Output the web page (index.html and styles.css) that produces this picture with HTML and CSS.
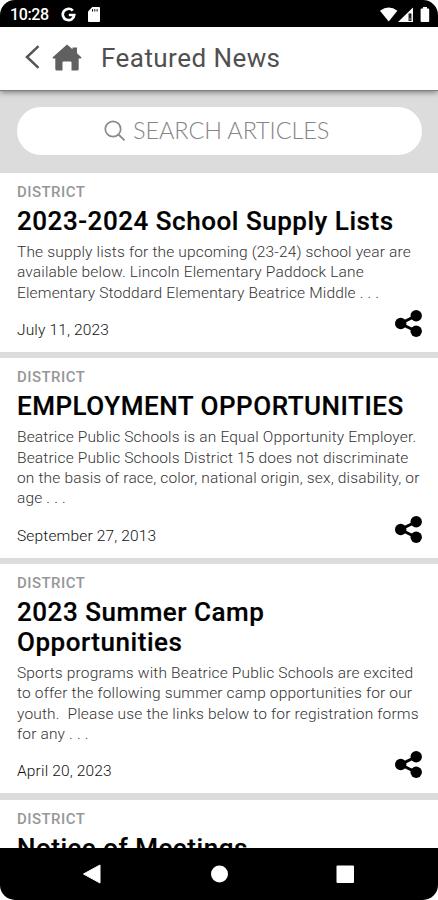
FILE: index.html
```html
<!DOCTYPE html>
<html lang="en">
<head>
    <meta charset="UTF-8">
    <meta name="viewport" content="width=device-width, initial-scale=1.0">
    <title>Featured News</title>
    <link rel="stylesheet" href="styles.css">
</head>
<body>
    <svg width="0" height="0" class="defs">
        <symbol id="share" viewBox="0 0 27 27">
            <path d="M21.5 5.5L5.5 13.5L21.5 21.5" fill="none" stroke="#000" stroke-width="3"/>
            <circle cx="5.7" cy="13.500" r="5.700"/>
            <circle cx="21.2" cy="5.8" r="5.700"/>
            <circle cx="21.2" cy="21.2" r="5.700"/>
        </symbol>
    </svg>
    <div id="phone">
        <div class="status">
            <span class="time">10:28</span>
            <svg class="google" width="15" height="16" viewBox="0 0 15 16">
                <path d="M11.8 3.7A5.7 5.7 0 1 0 13.2 8H7.8" fill="none" stroke="#fff" stroke-width="2.7"/>
            </svg>
            <svg class="sdcard" width="12" height="15" viewBox="0 0 12 15">
                <path d="M4.3 0H11a1 1 0 0 1 1 1v13a1 1 0 0 1-1 1H1a1 1 0 0 1-1-1V4.5z" fill="#fff"/>
                <path d="M4.5 2.2v2.3M6.8 2.2v2.3M9.1 2.2v2.3" stroke="#000" stroke-width="1"/>
            </svg>
            <svg class="signals" width="50" height="16" viewBox="0 0 50 16">
                <path d="M0 3.8Q8.7-3 17.4 3.8L8.7 14.6z" fill="#fff"/>
                <path d="M33 .5V15H18z" fill="#fff"/>
                <path d="M28 6.5h4.2V14H28z" fill="#999"/>
                <path d="M30 6.5v5M30 12.5v1.5" stroke="#000" stroke-width="1.6"/>
                <path d="M43 0h4v1.5h1.2a1 1 0 0 1 1 1V14a1 1 0 0 1-1 1h-6.6a1 1 0 0 1-1-1V2.5a1 1 0 0 1 1-1H43z" fill="#fff"/>
            </svg>
        </div>
        <div class="header">
            <svg class="back" width="15" height="24" viewBox="0 0 15 24">
                <path d="M13.5 1.2L2 12l11.5 10.8" fill="none" stroke="#555" stroke-width="2.5"/>
            </svg>
            <svg class="home" width="30" height="27" viewBox="0 0 30 27">
                <path d="M15 .5L20.5 5.2V3.5H25v5.8l4.3 3.9q.5 1.300-.8 1.300H26.700V25q0 1.500-1.500 1.500H19.500V18.500q0-1-1-1h-7q-1 0-1 1v8H4.800q-1.500 0-1.500-1.500V14.500H1.500q-1.300 0-.8-1.300z" fill="#606060"/>
            </svg>
            <h1>Featured News</h1>
        </div>
        <div class="search">
            <div class="search-box">
                <svg width="22" height="22" viewBox="0 0 22 22">
                    <circle cx="9" cy="9" r="7.7" fill="none" stroke="#8a8a8a" stroke-width="1.7"/>
                    <path d="M14.5 14.5L20.5 20.3" stroke="#8a8a8a" stroke-width="1.8"/>
                </svg>
                <span>SEARCH ARTICLES</span>
            </div>
        </div>
        <div class="list">
            <div class="card">
                <div class="label">DISTRICT</div>
                <h2>2023-2024 School Supply Lists</h2>
                <p>The supply lists for the upcoming (23-24) school year are<br>available below. Lincoln Elementary Paddock Lane<br>Elementary Stoddard Elementary Beatrice Middle . . .</p>
                <div class="bottom">
                    <span>July 11, 2023</span>
                    <svg class="share"><use href="#share"/></svg>
                </div>
            </div>
            <div class="card">
                <div class="label">DISTRICT</div>
                <h2>EMPLOYMENT OPPORTUNITIES</h2>
                <p>Beatrice Public Schools is an Equal Opportunity Employer.<br>Beatrice Public Schools District 15 does not discriminate<br>on the basis of race, color, national origin, sex, disability, or<br>age . . .</p>
                <div class="bottom">
                    <span>September 27, 2013</span>
                    <svg class="share"><use href="#share"/></svg>
                </div>
            </div>
            <div class="card">
                <div class="label">DISTRICT</div>
                <h2>2023 Summer Camp<br>Opportunities</h2>
                <p>Sports programs with Beatrice Public Schools are excited<br>to offer the following summer camp opportunities for our<br>youth.&nbsp; Please use the links below to for registration forms<br>for any . . .</p>
                <div class="bottom">
                    <span>April 20, 2023</span>
                    <svg class="share"><use href="#share"/></svg>
                </div>
            </div>
            <div class="card">
                <div class="label">DISTRICT</div>
                <h2>Notice of Meetings</h2>
            </div>
        </div>
        <div class="navbar">
            <svg width="438" height="52" viewBox="0 0 438 52">
                <path d="M83.5 26L100 17v18z" fill="#fff" stroke="#fff" stroke-width="1" stroke-linejoin="round"/>
                <circle cx="219.5" cy="26" r="8.5" fill="#fff"/>
                <rect x="336.5" y="17.5" width="17.5" height="17.5" rx="1" fill="#fff"/>
            </svg>
        </div>
    </div>
</body>
</html>
```

FILE: styles.css
```css
*{
    box-sizing: border-box;
}
body{
    margin: 0;
    background: #fff;
    font-family: Roboto, sans-serif;
}
.defs{
    display: none;
}
#phone{
    display: flex;
    flex-direction: column;
    width: 438px;
    height: 900px;
    border-radius: 15px;
    overflow: hidden;
    background: #fff;
}
.status{
    display: flex;
    align-items: center;
    flex: none;
    height: 27px;
    padding: 2px 8px 0 10px;
    background: #000;
    color: #fff;
}
.time{
    width: 51px;
    font-size: 16px;
    font-weight: 500;
    letter-spacing: -0.4px;
}
.sdcard{
    margin-left: 12px;
}
.signals{
    margin-left: auto;
}
.header{
    display: flex;
    align-items: center;
    flex: none;
    height: 64px;
    padding: 0 0 3px 25px;
    background: #fff;
    border-bottom: 1px solid #808080;
    box-shadow: 0 1px 6px rgba(0,0,0,.5);
    z-index: 1;
}
.home{
    margin-left: 12px;
}
h1{
    margin: 2px 0 0 19px;
    font-size: 26px;
    font-weight: 400;
    letter-spacing: 0.45px;
    color: #505050;
}
.search{
    flex: none;
    height: 82px;
    padding: 16px 16px 0 17px;
    background: #dcdcdc;
}
.search-box{
    display: flex;
    align-items: center;
    height: 48px;
    padding-left: 87px;
    border-radius: 24px;
    background: #fff;
    color: #858585;
}
.search-box span{
    margin: -2px 0 0 7px;
    font-family: Lato, sans-serif;
    font-size: 23.5px;
    font-weight: 300;
    letter-spacing: -0.1px;
    white-space: nowrap;
}
.list{
    flex: 1;
    min-height: 0;
    overflow: hidden;
    background: #dcdcdc;
}
.card{
    padding: 11px 16px 0 17px;
    margin-bottom: 6.5px;
    background: #fff;
    white-space: nowrap;
}
.label{
    height: 17px;
    line-height: 17px;
    font-size: 15px;
    font-weight: 500;
    letter-spacing: 0.45px;
    color: #979797;
}
h2{
    margin: 5px 0 6px;
    font-size: 26px;
    font-weight: 500;
    line-height: 30px;
    letter-spacing: 0.53px;
    color: #000;
    -webkit-text-stroke: 0.2px #000;
}
p{
    margin: 0;
    font-size: 15.5px;
    font-weight: 300;
    line-height: 20.3px;
    letter-spacing: 0.16px;
    color: #333;
}
.bottom{
    display: flex;
    justify-content: space-between;
    height: 49px;
    font-size: 15.5px;
    font-weight: 300;
    color: #111;
}
.bottom span{
    padding-top: 18px;
    line-height: 18px;
    letter-spacing: 0.16px;
}
.share{
    width: 27px;
    height: 27px;
    margin-top: 7px;
}
.navbar{
    flex: none;
    height: 52px;
    background: #000;
}
```
